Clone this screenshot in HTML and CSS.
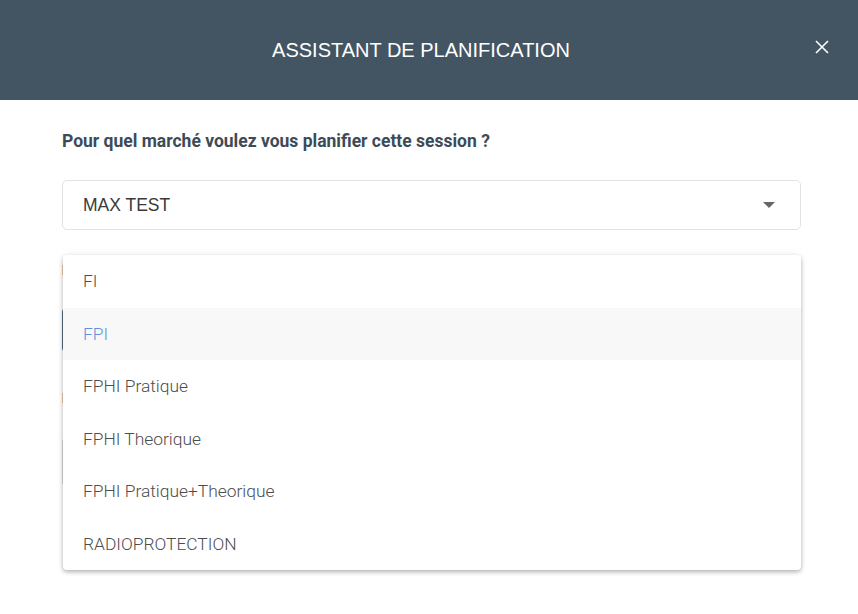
FILE: index.html
```html
<!DOCTYPE html>
<html lang="fr">
<head>
<meta charset="utf-8">
<title>Assistant de planification</title>
<link rel="stylesheet" href="styles.css">
</head>
<body>
<div class="modal">
  <header class="modal-header">
    <h1 class="modal-title">ASSISTANT DE PLANIFICATION</h1>
    <button class="close-btn" aria-label="Fermer">
      <svg width="14" height="14" viewBox="0 0 14 14"><path d="M1 1L13 13M13 1L1 13" stroke="#fff" stroke-width="1.6" fill="none"/></svg>
    </button>
  </header>
  <main class="modal-body">
    <div class="field">
      <label class="q-label">Pour quel marché voulez vous planifier cette session ?</label>
      <div class="select">
        <span class="select-value">MAX TEST</span>
        <span class="caret"></span>
      </div>
    </div>
    <div class="field hidden-field">
      <div class="label-stub"></div>
      <div class="input focused"></div>
    </div>
    <div class="field hidden-field second">
      <div class="label-stub"></div>
      <div class="input"></div>
    </div>
    <ul class="dropdown">
      <li class="option">FI</li>
      <li class="option active">FPI</li>
      <li class="option">FPHI Pratique</li>
      <li class="option">FPHI Theorique</li>
      <li class="option">FPHI Pratique+Theorique</li>
      <li class="option">RADIOPROTECTION</li>
    </ul>
  </main>
</div>
</body>
</html>
```

FILE: styles.css
```css
* { box-sizing: border-box; }
html, body { margin: 0; padding: 0; background: #fff; }
body { width: 858px; height: 614px; overflow: hidden; font-family: "Liberation Sans", Arial, sans-serif; }

.modal-header {
  height: 100px;
  background: #435563;
  display: flex;
  align-items: center;
  justify-content: center;
  padding-right: 16px;
  position: relative;
}
.modal-title {
  margin: 0;
  color: #fff;
  font-family: "Liberation Sans", Arial, sans-serif;
  font-weight: 400;
  font-size: 20px;
}
.close-btn {
  position: absolute;
  right: 28px;
  top: 39px;
  width: 16px;
  height: 16px;
  padding: 0;
  border: 0;
  background: transparent;
  display: flex;
  align-items: center;
  justify-content: center;
}

.modal-body {
  position: relative;
  padding: 31px 57px 0 62px;
}
.field { display: flex; flex-direction: column; }
.q-label {
  font-family: Roboto, "Liberation Sans", sans-serif;
  font-weight: 700;
  font-size: 17.5px;
  color: #3c4b57;
  line-height: 20px;
  margin-bottom: 29px;
}
.select {
  height: 50px;
  border: 1px solid #e3e3e3;
  border-radius: 5px;
  display: flex;
  align-items: center;
  justify-content: space-between;
  padding: 0 25px 0 20px;
}
.select-value {
  font-family: "Liberation Sans", Arial, sans-serif;
  font-size: 17.5px;
  color: #3a3a3a;
}
.caret {
  width: 0; height: 0;
  border-left: 6px solid transparent;
  border-right: 6px solid transparent;
  border-top: 6px solid #666;
}
.hidden-field { margin-top: 35px; }
.label-stub {
  width: 160px;
  height: 10px;
  background: #d98b3a;
  opacity: 0.45;
  margin-bottom: 32px;
}
.input {
  height: 46px;
  border: 1px solid #d8d8d8;
  border-radius: 5px;
}
.input.focused { border-color: #56697a; }
.hidden-field.second { margin-top: 40px; }
.hidden-field.second .label-stub { margin-bottom: 34px; }
.hidden-field.second .input { height: 50px; }

.dropdown {
  position: absolute;
  top: 155px;
  left: 63px;
  width: 738px;
  margin: 0;
  padding: 0;
  list-style: none;
  background: #fff;
  border-radius: 4px;
  box-shadow: 0 2px 4px rgba(0,0,0,0.28), 0 0 8px rgba(0,0,0,0.06);
}
.option {
  height: 52.5px;
  display: flex;
  align-items: center;
  padding-left: 20px;
  font-family: Roboto, "Liberation Sans", sans-serif;
  font-weight: 300;
  font-size: 17.4px;
  color: #4d4d4d;
}
.option.active {
  background: #f8f8f8;
  color: #5f8fdf;
}
```
